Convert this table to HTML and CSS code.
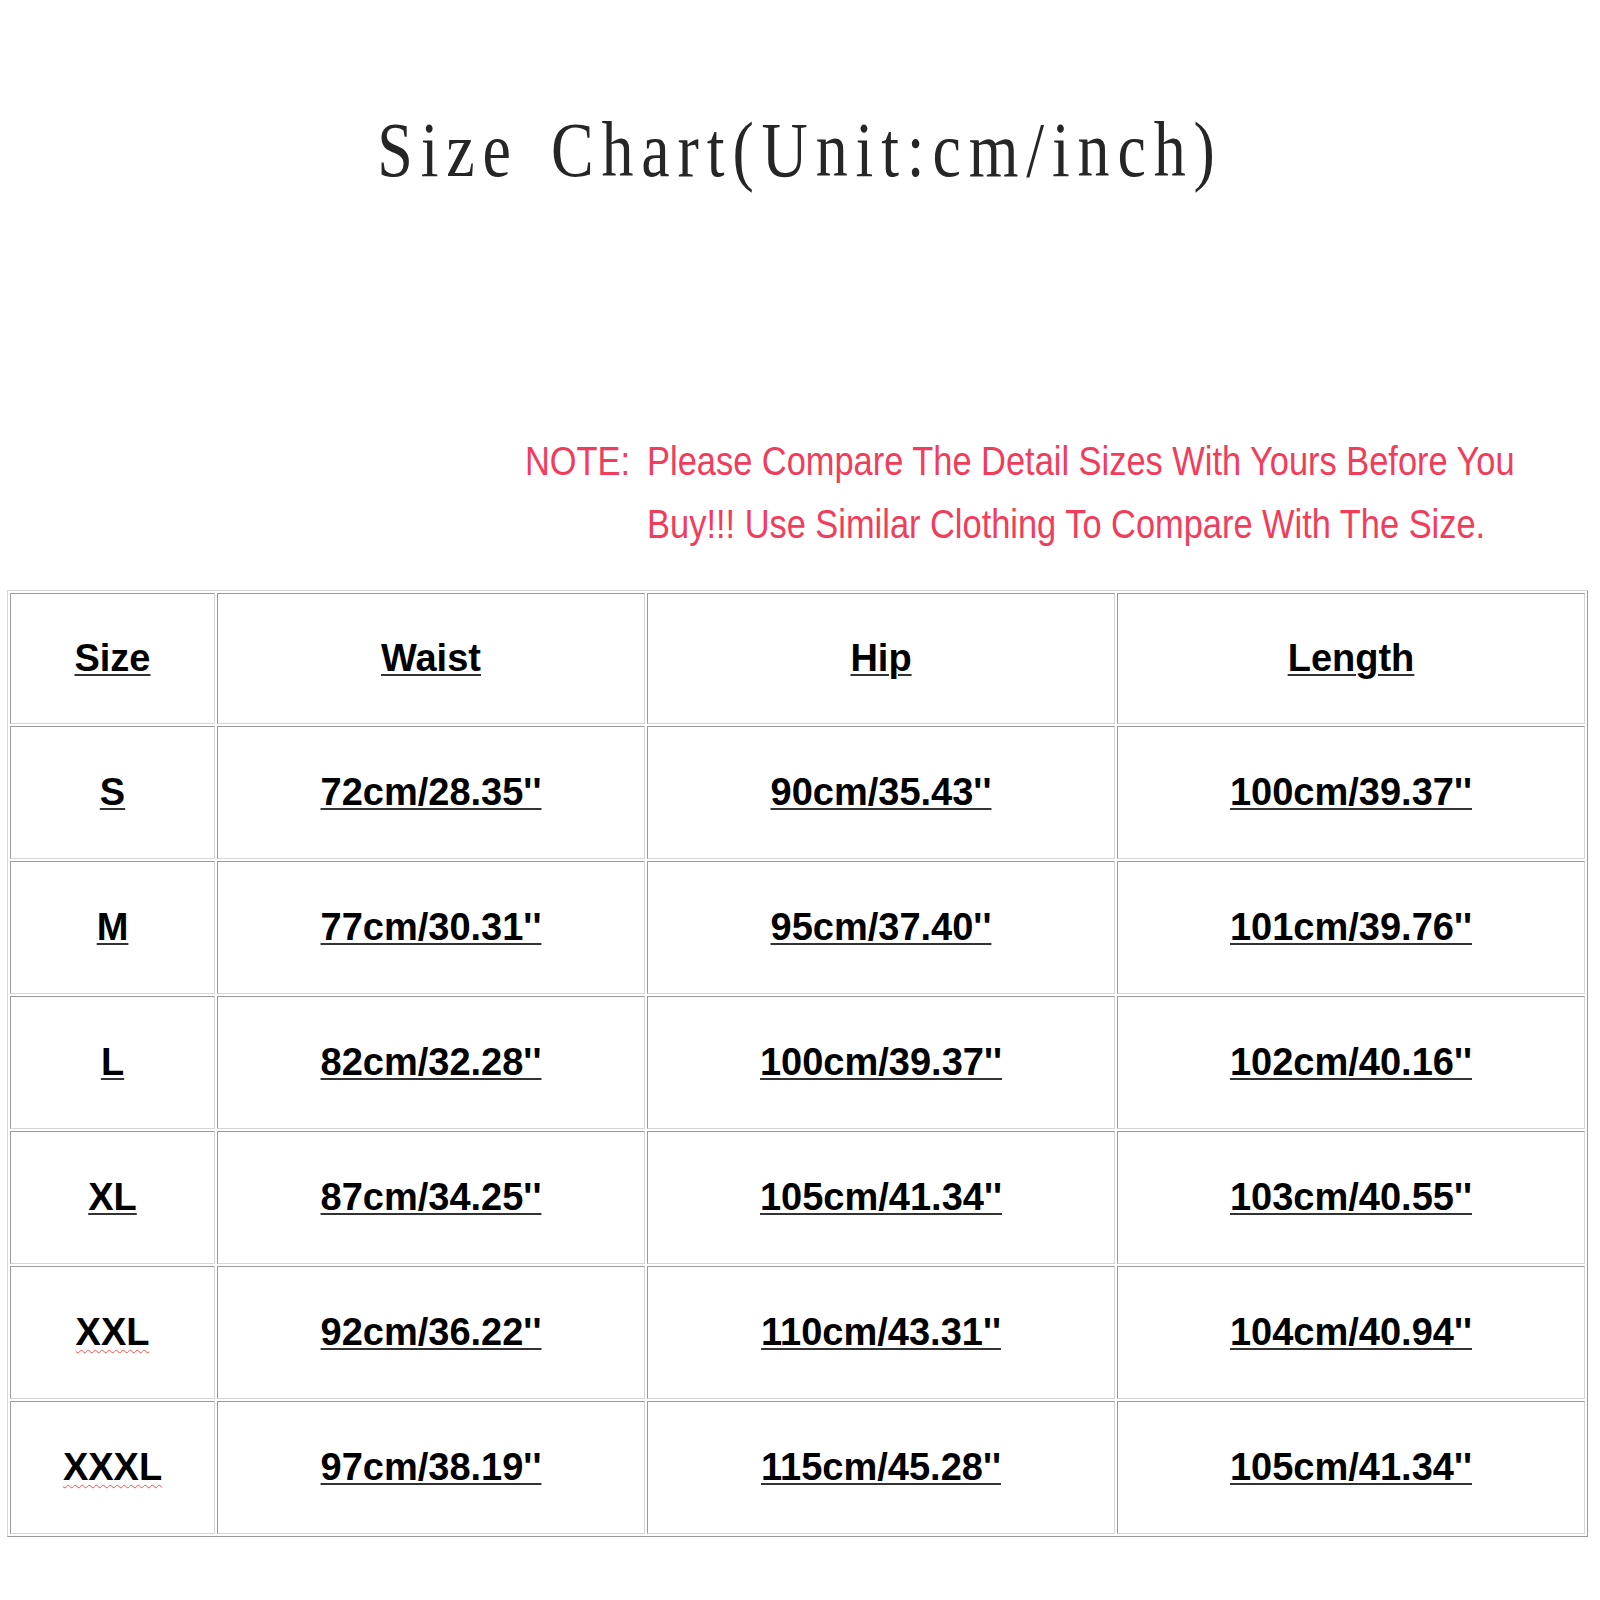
FILE: index.html
```html
<!DOCTYPE html>
<html>
<head>
<meta charset="utf-8">
<title>Size Chart</title>
<link rel="stylesheet" href="styles.css">
</head>
<body>
<h1 class="title">Size Chart(Unit:cm/inch)</h1>
<div class="note">
  <span class="note-label">NOTE:</span>
  <p class="note-text">Please Compare The Detail Sizes With Yours Before You<br>Buy!!! Use Similar Clothing To Compare With The Size.</p>
</div>
<table class="chart">
  <colgroup>
    <col class="c-size">
    <col class="c-waist">
    <col class="c-hip">
    <col class="c-length">
  </colgroup>
  <thead>
    <tr class="head-row"><th><u>Size</u></th><th><u>Waist</u></th><th><u>Hip</u></th><th><u>Length</u></th></tr>
  </thead>
  <tbody>
    <tr><td><u>S</u></td><td><u>72cm/28.35''</u></td><td><u>90cm/35.43''</u></td><td><u>100cm/39.37''</u></td></tr>
    <tr><td><u>M</u></td><td><u>77cm/30.31''</u></td><td><u>95cm/37.40''</u></td><td><u>101cm/39.76''</u></td></tr>
    <tr><td><u>L</u></td><td><u>82cm/32.28''</u></td><td><u>100cm/39.37''</u></td><td><u>102cm/40.16''</u></td></tr>
    <tr><td><u>XL</u></td><td><u>87cm/34.25''</u></td><td><u>105cm/41.34''</u></td><td><u>103cm/40.55''</u></td></tr>
    <tr><td><u class="spell">XXL</u></td><td><u>92cm/36.22''</u></td><td><u>110cm/43.31''</u></td><td><u>104cm/40.94''</u></td></tr>
    <tr><td><u class="spell">XXXL</u></td><td><u>97cm/38.19''</u></td><td><u>115cm/45.28''</u></td><td><u>105cm/41.34''</u></td></tr>
  </tbody>
</table>
</body>
</html>
```
FILE: styles.css
```css
html, body {
  margin: 0;
  padding: 0;
  background: #ffffff;
}

.title {
  margin: 0;
  padding-top: 110px;
  height: 80px;
  line-height: 80px;
  text-align: center;
  font-family: "Liberation Serif", serif;
  font-weight: normal;
  font-size: 78px;
  letter-spacing: 9.6px;
  word-spacing: 10px;
  transform: scaleX(0.82);
  color: #262626;
}

.note {
  display: flex;
  margin: 240px 0 0 525px;
  transform: scaleX(0.86);
  transform-origin: left top;
  font-family: "Liberation Sans", Arial, sans-serif;
  font-size: 40px;
  line-height: 63px;
  color: #f23c5c;
}

.note-label {
  width: 142px;
  flex: none;
}

.note-text {
  margin: 0;
  white-space: nowrap;
}

.chart {
  margin: 34px 0 0 7px;
  width: 1581px;
  table-layout: fixed;
  border-collapse: separate;
  border-spacing: 2px;
  border: 1px solid;
  border-color: #d6d6d6 #9a9a9a #9a9a9a #d6d6d6;
  font-family: "Liberation Sans", Arial, sans-serif;
  font-weight: bold;
  font-size: 38px;
  color: #000;
}

.c-size { width: 205px; }
.c-waist { width: 428px; }
.c-hip { width: 468px; }
.c-length { width: 468px; }

.chart th,
.chart td {
  box-sizing: border-box;
  height: 133px;
  padding: 0;
  text-align: center;
  vertical-align: middle;
  font-weight: bold;
  border: 1px solid;
  border-color: #9a9a9a #d6d6d6 #d6d6d6 #9a9a9a;
}

.chart .head-row th {
  height: 131px;
}

.chart u {
  text-decoration: underline;
  text-decoration-thickness: 2px;
  text-underline-offset: 3px;
  text-decoration-color: #333;
}

.chart u.spell {
  text-decoration: underline wavy #ff4a4a;
  text-decoration-thickness: 1px;
  text-underline-offset: 4px;
}
```
